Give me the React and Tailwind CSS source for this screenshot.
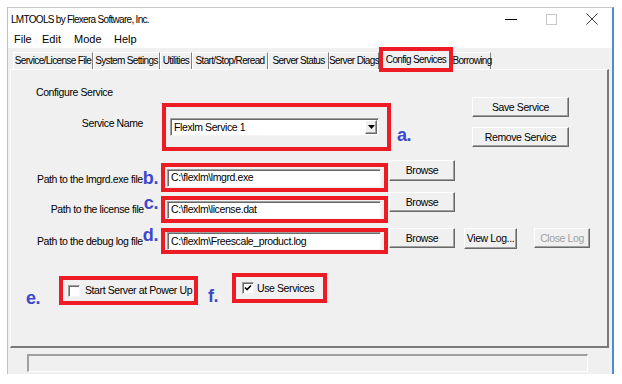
import React from 'react';

// shared win-classic looks
const RED = 'border-[4px] border-[#ed1c24]';
const TXT = 'text-[10.5px] tracking-[-0.4px] whitespace-nowrap';
const BTN = `bg-[#f0f0f0] border border-t-white border-l-white border-r-[#696969] border-b-[#696969] shadow-[inset_-1px_-1px_0_#a0a0a0] flex items-center justify-center leading-none ${TXT}`;
const SUNKEN =
  'bg-white border border-t-[#a0a0a0] border-l-[#a0a0a0] border-r-[#f5f5f5] border-b-[#f5f5f5] shadow-[inset_1px_1px_0_#696969]';
const MARK = 'font-bold text-[18px] leading-[18px] tracking-[-0.4px] text-[#3f48cc] whitespace-nowrap';
const TABTXT = 'text-[10px] tracking-[-0.65px] whitespace-nowrap leading-none';

function Tab({ label, w }) {
  return (
    <div
      className={`h-[17px] ${w} flex items-center justify-center border-t border-l border-t-white border-l-white border-r border-r-[#808080] ${TABTXT}`}
    >
      {label}
    </div>
  );
}

function Checkbox({ checked }) {
  return (
    <div className={`w-[12px] h-[12px] ${SUNKEN} flex items-center justify-center`}>
      {checked && (
        <svg width="8" height="8" viewBox="0 0 8 8">
          <path d="M1 3.5 L3 5.5 L7 1.5" stroke="#000" strokeWidth="1.6" fill="none" />
        </svg>
      )}
    </div>
  );
}

function PathRow({ label, mark, labelMt, markMt, boxMt, boxH, value, rowMt, children }) {
  return (
    <div className={`flex items-start ${rowMt}`}>
      <div className="w-[150px] flex justify-end items-start pr-[3px]">
        <span className={`${labelMt} ${TXT} leading-[14px]`}>{label}</span>
        <span className={`${markMt} ${MARK}`}>{mark}</span>
      </div>
      <div className={`w-[227px] ${boxH} ${boxMt} ${RED} flex items-center pl-[2px]`}>
        <div className={`w-[214px] h-[18px] ${SUNKEN} flex items-center pl-[3px] leading-none ${TXT}`}>
          {value}
        </div>
      </div>
      {children}
    </div>
  );
}

export default function App() {
  return (
    <div className="w-[622px] h-[384px] bg-white overflow-hidden pt-[7px] pl-[7px] font-['Liberation_Sans',Arial,sans-serif] text-black">
      <div className="w-[607px] h-[367px] border-t border-t-[#c8c8c8] border-l border-l-[#a9c8ea] border-r-2 border-r-[#4a8fd6] bg-[#f0f0f0] flex flex-col">
        {/* title bar */}
        <div className="h-[22px] bg-white flex items-center">
          <span className="pl-[3px] text-[10px] tracking-[-0.7px] whitespace-nowrap flex-1">
            LMTOOLS by Flexera Software, Inc.
          </span>
          <div className="w-[40px] h-full flex items-center justify-center">
            <svg width="12" height="12" viewBox="0 0 12 12">
              <path d="M0 6.5 H12" stroke="#000" strokeWidth="1" />
            </svg>
          </div>
          <div className="w-[40px] h-full flex items-center justify-center">
            <svg width="11" height="11" viewBox="0 0 11 11">
              <rect x="0.5" y="0.5" width="10" height="10" stroke="#c8c8c8" fill="none" />
            </svg>
          </div>
          <div className="w-[41px] h-full flex items-center justify-center">
            <svg width="12" height="12" viewBox="0 0 12 12">
              <path d="M0.5 0.5 L11.5 11.5 M11.5 0.5 L0.5 11.5" stroke="#222" strokeWidth="0.9" />
            </svg>
          </div>
        </div>

        {/* menu */}
        <div className="h-[18px] bg-white flex items-center pl-[6px] text-[11px] leading-none">
          <span className="w-[28px]">File</span>
          <span className="w-[32px]">Edit</span>
          <span className="w-[40px]">Mode</span>
          <span>Help</span>
        </div>

        {/* tabs */}
        <div className="h-[21px] flex items-end pl-[5px]">
          <Tab label="Service/License File" w="w-[80px]" />
          <Tab label="System Settings" w="w-[67px]" />
          <Tab label="Utilities" w="w-[32px]" />
          <Tab label="Start/Stop/Reread" w="w-[76px]" />
          <Tab label="Server Status" w="w-[61px]" />
          <Tab label="Server Diags" w="w-[50px]" />
          <div
            className={`relative z-10 self-start -mt-[1px] w-[74px] h-[25px] ${RED} bg-[#f0f0f0] flex items-start justify-center pt-[4px] ${TABTXT}`}
          >
            Config Services
          </div>
          <Tab label="Borrowing" w="w-[38px]" />
        </div>

        {/* panel */}
        <div className="ml-[2px] w-[599px] h-[279px] border-t border-l border-t-white border-l-white border-r-2 border-b-2 border-r-[#7a7a7a] border-b-[#7a7a7a] flex flex-col">
          {/* configure service */}
          <div className="flex items-start">
            <div className="flex flex-col">
              <div className={`mt-[15px] pl-[25px] leading-[14px] ${TXT}`}>Configure Service</div>
              <div className="mt-[4px] flex items-start">
                <div className={`w-[151px] text-right pr-[19px] mt-[13px] leading-[14px] ${TXT}`}>Service Name</div>
                <div className={`w-[229px] h-[48px] ${RED} pl-[4px] pt-[11px]`}>
                  <div className={`w-[209px] h-[18px] ${SUNKEN} flex items-center`}>
                    <span className={`flex-1 pl-[3px] leading-none ${TXT}`}>Flexlm Service 1</span>
                    <div className={`w-[12px] h-[14px] ${BTN} mr-[1px]`}>
                      <svg width="7" height="4" viewBox="0 0 7 4">
                        <path d="M0 0 H7 L3.5 4 Z" fill="#000" />
                      </svg>
                    </div>
                  </div>
                </div>
                <span className={`ml-[6px] mt-[23px] ${MARK}`}>a.</span>
              </div>
            </div>
            <div className="ml-auto mr-[38px] pt-[27px] flex flex-col gap-[10px]">
              <div className={`w-[97px] h-[20px] ${BTN}`}>Save Service</div>
              <div className={`w-[97px] h-[20px] ${BTN}`}>Remove Service</div>
            </div>
          </div>

          {/* paths */}
          <PathRow
            rowMt="mt-[9px]"
            label="Path to the lmgrd.exe file"
            mark="b."
            labelMt="mt-[12px]"
            markMt="mt-[9px]"
            boxMt="mt-[3px]"
            boxH="h-[29px]"
            value="C:\flexlm\lmgrd.exe"
          >
            <div className={`ml-[1px] w-[66px] h-[21px] ${BTN}`}>Browse</div>
          </PathRow>
          <PathRow
            rowMt="mt-0"
            label="Path to the license file"
            mark="c."
            labelMt="mt-[10px]"
            markMt="mt-[2px]"
            boxMt="mt-[4px]"
            boxH="h-[27px]"
            value="C:\flexlm\license.dat"
          >
            <div className={`ml-[1px] w-[66px] h-[20px] ${BTN}`}>Browse</div>
          </PathRow>
          <PathRow
            rowMt="mt-[5px]"
            label="Path to the debug log file"
            mark="d."
            labelMt="mt-[6px]"
            markMt="-mt-[2px]"
            boxMt="mt-0"
            boxH="h-[26px]"
            value="C:\flexlm\Freescale_product.log"
          >
            <div className={`ml-[1px] w-[66px] h-[20px] ${BTN}`}>Browse</div>
            <div className={`ml-[9px] w-[53px] h-[21px] ${BTN}`}>View Log...</div>
            <div className={`ml-[17px] w-[56px] h-[20px] ${BTN} text-[#a0a0a0]`}>Close Log</div>
          </PathRow>

          {/* checkboxes */}
          <div className="mt-[19px] flex items-start">
            <div className="w-[48px] pl-[15px]">
              <span className={`block mt-[16px] ${MARK}`}>e.</span>
            </div>
            <div className={`mt-[3px] w-[139px] h-[29px] ${RED} flex items-center pl-[5px]`}>
              <Checkbox />
              <span className={`ml-[5px] leading-none ${TXT}`}>Start Server at Power Up</span>
            </div>
            <div className="w-[34px] pl-[10px]">
              <span className={`block mt-[14px] ${MARK}`}>f.</span>
            </div>
            <div className={`w-[95px] h-[30px] ${RED} flex items-center pl-[6px]`}>
              <Checkbox checked />
              <span className={`ml-[3px] leading-none ${TXT}`}>Use Services</span>
            </div>
          </div>
        </div>

        {/* status bar */}
        <div className="mt-[6px] ml-[19px] w-[561px] h-[18px] border-t-2 border-l-2 border-t-[#a0a0a0] border-l-[#a0a0a0] border-r border-b border-r-white border-b-white" />
      </div>
    </div>
  );
}
